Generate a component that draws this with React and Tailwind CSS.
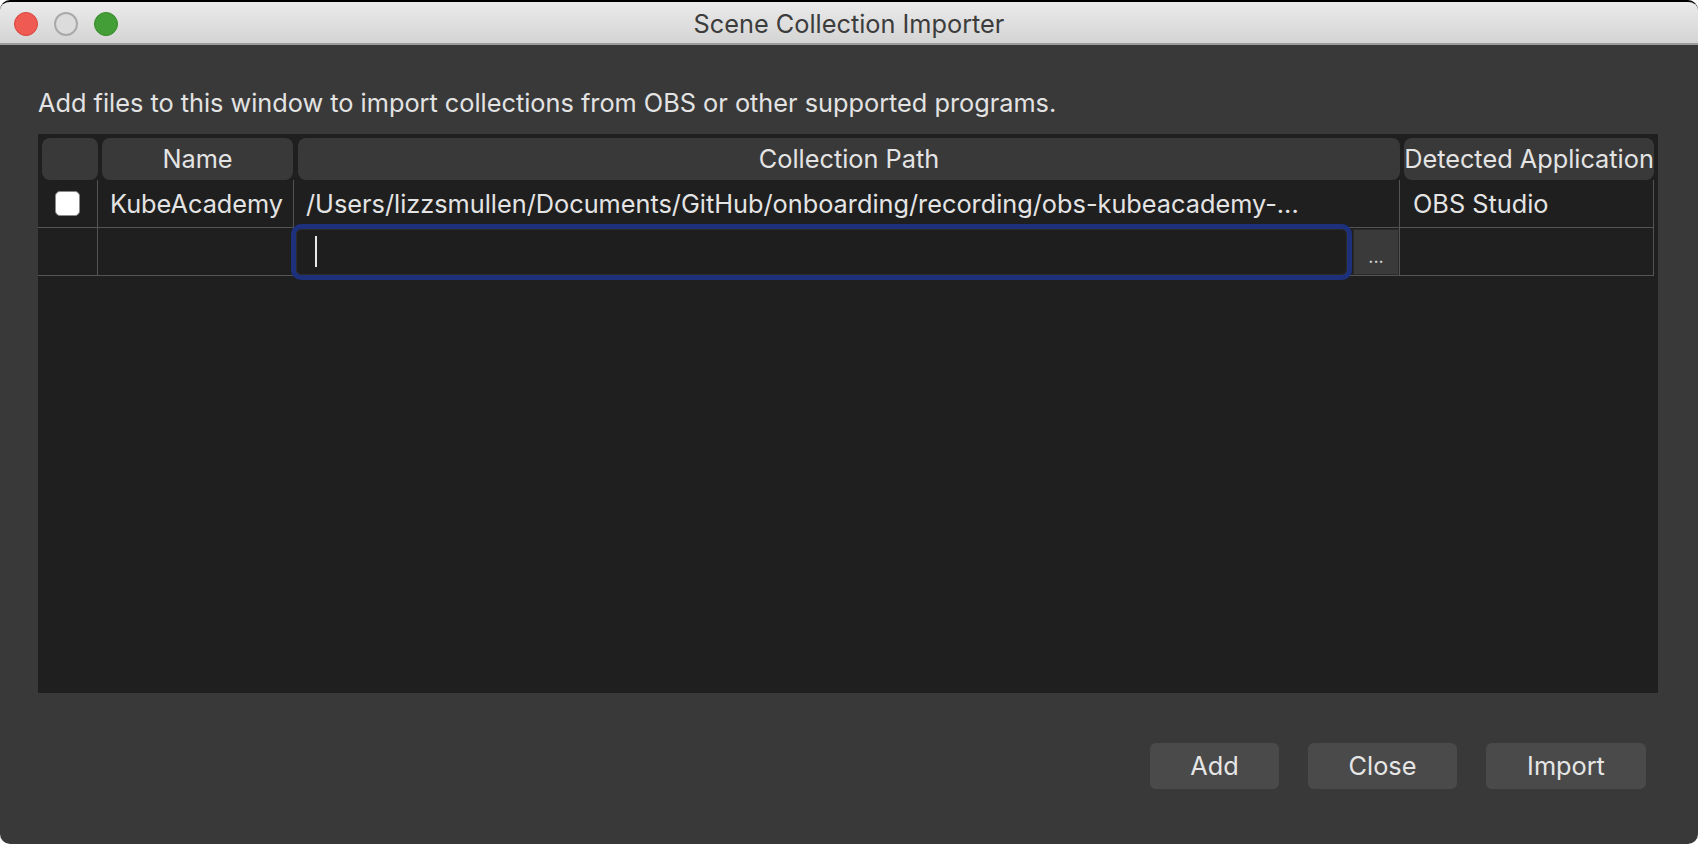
import React from 'react';

const lineColor = 'border-[#545454]';

const HeaderCell = ({ children, className = '' }) => (
  <div className={`h-[42px] rounded-[8px] bg-[#393939] flex items-center justify-center overflow-hidden whitespace-nowrap text-[#e4e4e4] ${className}`}>
    {children}
  </div>
);

const App = () => {
  return (
    <div
      className="min-h-screen bg-white"
      style={{ fontFamily: 'Inter, "Noto Sans", sans-serif' }}
    >
      <div className="w-[1698px] h-[844px] rounded-[10px] overflow-hidden bg-[#393939] flex flex-col border-t-2 border-black">
        {/* Title bar */}
        <div className="relative h-[43px] shrink-0 bg-gradient-to-b from-[#ebebeb] to-[#d4d4d4] border-b-2 border-[#9c9c9c] flex items-center justify-center pt-[2px]">
          <div className="absolute left-[14px] top-[10px] flex items-center gap-[16px]">
            <span className="w-[24px] h-[24px] rounded-full bg-[#ef5a52] border border-[#d8453d]" />
            <span className="w-[24px] h-[24px] rounded-full bg-[#dcdcdc] border-2 border-[#a9a9a9]" />
            <span className="w-[24px] h-[24px] rounded-full bg-[#449e38] border border-[#358a2b]" />
          </div>
          <span className="text-[25.3px] leading-[30px] text-[#3c3c3c]">Scene Collection Importer</span>
        </div>

        {/* Body */}
        <div className="flex-1 flex flex-col pl-[38px] pr-[40px]">
          <p className="mt-[43px] h-[30px] leading-[30px] text-[25.3px] text-[#e3e3e3]">
            Add files to this window to import collections from OBS or other supported programs.
          </p>

          <div className="mt-[16px] h-[559px] bg-[#1f1f1f] pt-[4px] text-[25.3px] leading-[30px] text-[#e4e4e4]">
            <div className="grid grid-cols-[60px_196px_1106px_254px]">
              {/* header */}
              <div className="pl-[4px]"><HeaderCell /></div>
              <div className="pl-[4px] pr-[1px]"><HeaderCell>Name</HeaderCell></div>
              <div className="pl-[4px]"><HeaderCell>Collection Path</HeaderCell></div>
              <div className="pl-[4px]"><HeaderCell>Detected Application</HeaderCell></div>

              {/* row 1 */}
              <div className={`h-[48px] border-r border-b ${lineColor} flex items-center justify-center`}>
                <span className="w-[25px] h-[25px] rounded-[5px] bg-white border border-[#8a8a8a]" />
              </div>
              <div className={`h-[48px] border-r border-b ${lineColor} flex items-center pl-[12px]`}>
                KubeAcademy
              </div>
              <div className={`h-[48px] border-r border-b ${lineColor} flex items-center pl-[12px] whitespace-nowrap overflow-hidden`}>
                /Users/lizzsmullen/Documents/GitHub/onboarding/recording/obs-kubeacademy-...
              </div>
              <div className={`h-[48px] border-r border-b ${lineColor} flex items-center pl-[13px]`}>
                OBS Studio
              </div>

              {/* row 2 */}
              <div className={`h-[48px] border-r border-b ${lineColor}`} />
              <div className={`h-[48px] border-r border-b ${lineColor}`} />
              <div className={`h-[48px] border-r border-b ${lineColor} flex items-center pl-[2px] gap-[6px]`}>
                <div className="flex-1 h-[46px] rounded-[5px] bg-[#1e1e1e] border border-[#2c2c2c] shadow-[0_0_0_5px_#1d307c] flex items-center pl-[18px]">
                  <span className="w-[2px] h-[31px] bg-[#e8e8e8]" />
                </div>
                <div className="w-[46px] h-[46px] bg-[#3a3a3a] border border-[#2a2a2a] flex items-center justify-center text-[18px] text-[#d8d8d8] leading-none pt-[10px]">
                  ...
                </div>
              </div>
              <div className={`h-[48px] border-r border-b ${lineColor}`} />
            </div>
          </div>

          <div className="mt-[50px] flex justify-end gap-[29px] pr-[12px] text-[25.3px] text-[#e6e6e6]">
            <button className="w-[129px] h-[46px] rounded-[6px] bg-[#4a4a4a]">Add</button>
            <button className="w-[149px] h-[46px] rounded-[6px] bg-[#4a4a4a]">Close</button>
            <button className="w-[160px] h-[46px] rounded-[6px] bg-[#4a4a4a]">Import</button>
          </div>
        </div>
      </div>
    </div>
  );
};

export default App;
